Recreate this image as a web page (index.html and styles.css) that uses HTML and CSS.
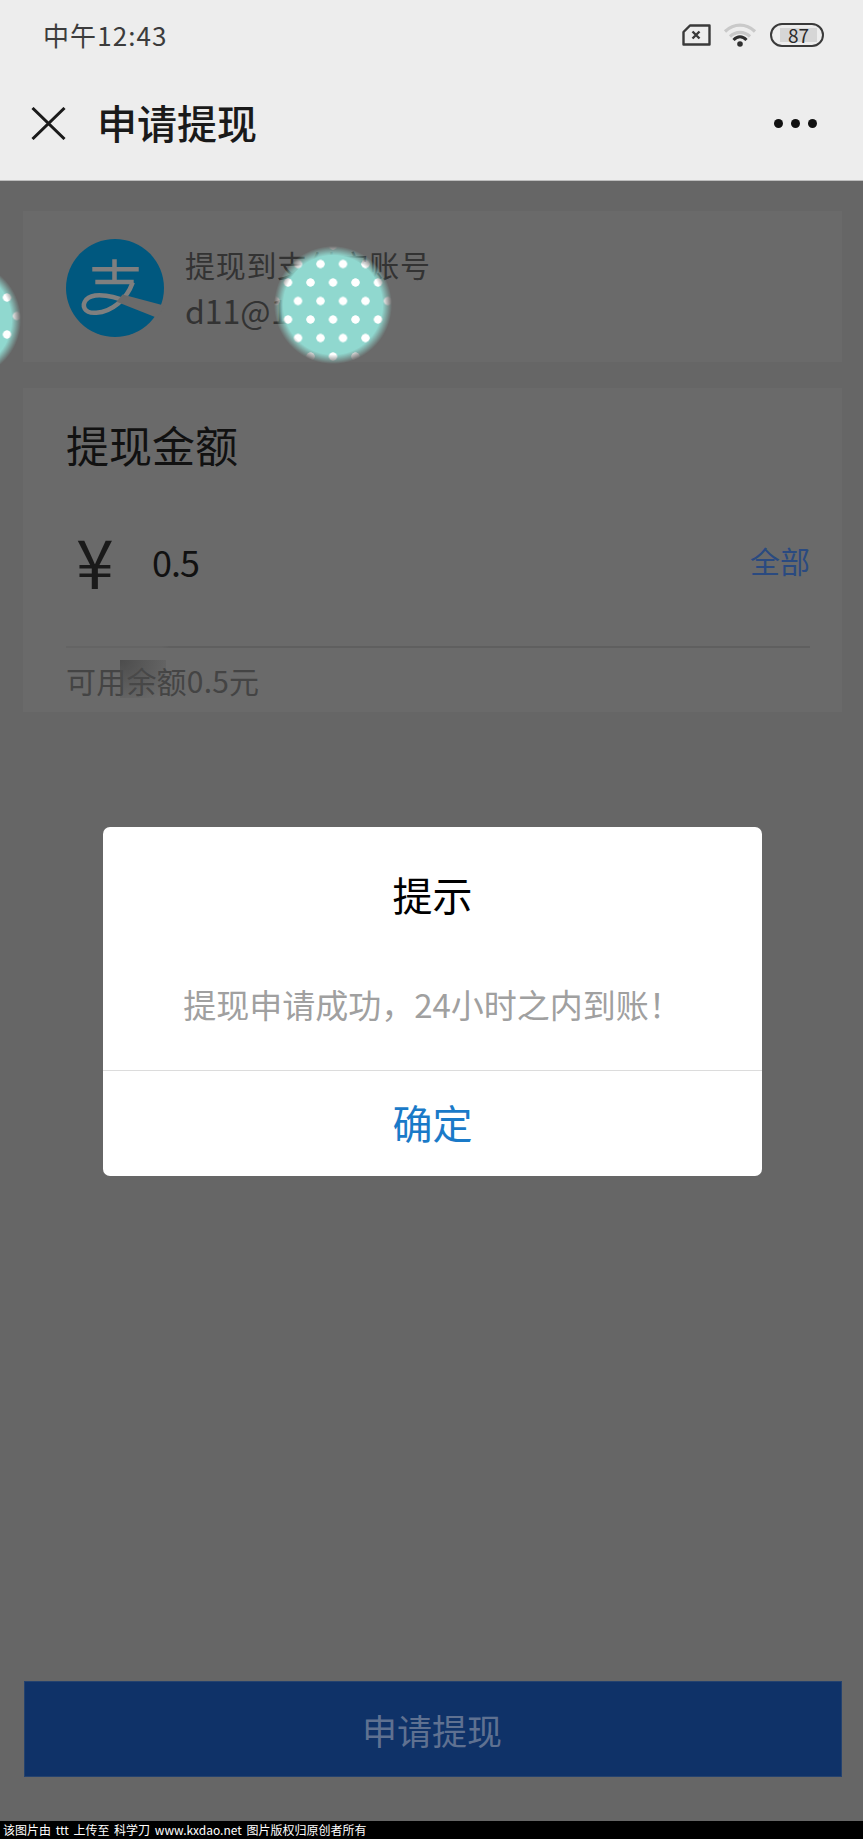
FILE: index.html
```html
<!DOCTYPE html>
<html lang="zh-CN">
<head>
    <meta charset="UTF-8">
    <meta name="viewport" content="width=device-width, initial-scale=1.0">
    <title>申请提现</title>
    <link rel="stylesheet" href="styles.css">
</head>
<body>
    <div class="page">
        <header class="top">
            <div class="status">
                <span class="time">中午12:43</span>
                <div class="status-icons">
                    <svg class="sim" viewBox="0 0 29 22">
                        <path d="M8 1.5H27.5V20.5H1.5V8Z" fill="none" stroke="#3a3a3a" stroke-width="2.4" stroke-linejoin="round"/>
                        <path d="M10.5 7.5L17.5 14.5M17.5 7.5L10.5 14.5" stroke="#3a3a3a" stroke-width="2.4"/>
                    </svg>
                    <svg class="wifi" viewBox="0 0 34 24">
                        <path d="M2 8.5C11 0 23 0 32 8.5" fill="none" stroke="#c9c9c9" stroke-width="3.2"/>
                        <path d="M7 13.5C13 8 21 8 27 13.5" fill="none" stroke="#c9c9c9" stroke-width="3.2"/>
                        <path d="M10.5 17C14.5 12.8 19.5 12.8 23.5 17" fill="none" stroke="#2f2f2f" stroke-width="3"/>
                        <circle cx="17" cy="21" r="2.8" fill="#2f2f2f"/>
                    </svg>
                    <div class="battery"><span class="battery-fill">87</span></div>
                </div>
            </div>
            <nav class="nav">
                <svg class="close" viewBox="0 0 35 33">
                    <path d="M1.5 1L33.5 32M33.5 1L1.5 32" stroke="#1a1a1a" stroke-width="3"/>
                </svg>
                <h1 class="nav-title">申请提现</h1>
                <div class="more"><i></i><i></i><i></i></div>
            </nav>
        </header>

        <main class="main">
            <section class="card account">
                <svg class="alipay" viewBox="0 0 97 97">
                    <circle cx="48.5" cy="48.5" r="48.5" fill="#00587f"/>
                    <path d="M26 30H72M48 20V42M29 42.5H67" fill="none" stroke="#7f7f7f" stroke-width="4.5"/>
                    <path d="M66 43C60 60 45 72 30 73C18 74 15 66 20 60C28 52 48 56 70 66" fill="none" stroke="#7f7f7f" stroke-width="4.5"/>
                    <path d="M56 55L98 66L90 78L50 62Z" fill="#6a6a6a"/>
                </svg>
                <div class="account-text">
                    <p class="account-label">提现到支付宝账号</p>
                    <p class="account-name">d11@1</p>
                </div>
            </section>

            <section class="card amount">
                <h2 class="amount-title">提现金额</h2>
                <div class="amount-row">
                    <span class="yen">¥</span>
                    <span class="value">0.5</span>
                    <a class="all">全部</a>
                </div>
                <p class="balance">可用余额0.5元</p>
                <div class="smudge"></div>
            </section>

            <button class="submit">申请提现</button>
        </main>

        <footer class="credit">该图片由 ttt 上传至 科学刀 www.kxdao.net 图片版权归原创者所有</footer>

        <div class="dialog">
            <h3 class="dialog-title">提示</h3>
            <p class="dialog-text">提现申请成功，24小时之内到账！</p>
            <a class="dialog-ok">确定</a>
        </div>

        <div class="sticker sticker-main"></div>
        <div class="sticker sticker-left"></div>
    </div>
</body>
</html>
```

FILE: styles.css
```css
* {
    box-sizing: border-box;
}
body {
    margin: 0;
    font-family: "Noto Sans CJK SC", "Noto Sans", sans-serif;
}
p, h1, h2, h3 {
    margin: 0;
    font-weight: 400;
}
.page {
    position: relative;
    width: 863px;
    height: 1839px;
    display: flex;
    flex-direction: column;
    overflow: hidden;
    background: #666;
}

/* top bars */
.top {
    height: 181px;
    background: #ededed;
    border-bottom: 1px solid #bdbdbd;
}
.status {
    height: 70px;
    padding: 0 39px 0 43px;
    display: flex;
    align-items: center;
    justify-content: space-between;
}
.time {
    margin-top: -2px;
    font-size: 26px;
    letter-spacing: 1.1px;
    color: #3c3c3c;
}
.status-icons {
    display: flex;
    align-items: center;
}
.sim {
    width: 29px;
    height: 22px;
}
.wifi {
    width: 34px;
    height: 24px;
    margin-left: 12px;
}
.battery {
    width: 54px;
    height: 24px;
    margin-left: 13px;
    padding: 3px 5px 3px 8px;
    border: 2px solid #3a3a3a;
    border-radius: 12px;
}
.battery-fill {
    display: block;
    height: 14px;
    line-height: 14px;
    text-align: center;
    font-size: 19px;
    color: #2a2a2a;
    background: #d6d6d6;
}
.nav {
    height: 110px;
    padding: 0 46px 0 31px;
    display: flex;
    align-items: center;
}
.close {
    width: 35px;
    height: 33px;
    margin-top: -4px;
}
.nav-title {
    margin-top: -6px;
    margin-left: 31px;
    font-size: 40px;
    font-weight: 500;
    color: #1a1a1a;
}
.more {
    margin-top: -4px;
    margin-left: auto;
    display: flex;
    gap: 8px;
}
.more i {
    width: 9px;
    height: 9px;
    border-radius: 50%;
    background: #111;
}

/* dimmed page content */
.main {
    flex: 1;
    padding: 30px 21px 0 23px;
    display: flex;
    flex-direction: column;
}
.card {
    background: #6a6a6a;
}
.account {
    height: 151px;
    padding-left: 43px;
    display: flex;
    align-items: center;
}
.alipay {
    width: 98px;
    height: 98px;
    margin-top: 3px;
    flex: none;
}
.account-text {
    margin-left: 21px;
    color: #333;
}
.account-label {
    font-size: 30px;
    letter-spacing: 0.7px;
    line-height: 46px;
}
.account-name {
    font-size: 32px;
    line-height: 46px;
}
.amount {
    position: relative;
    height: 324px;
    margin-top: 26px;
    padding: 26px 32px 0 43px;
}
.amount-title {
    font-size: 43px;
    line-height: 60px;
    color: #111;
}
.amount-row {
    height: 147px;
    margin-top: 27px;
    padding-bottom: 28px;
    display: flex;
    align-items: center;
    border-bottom: 2px solid #5f5f5f;
    border-image: linear-gradient(90deg, #646464 0, #646464 13%, #5f5f5f 14%) 1;
}
.yen {
    width: 86px;
    padding-left: 10px;
    font-size: 68px;
    color: #1a1a1a;
}
.value {
    margin-top: 2px;
    font-size: 36px;
    letter-spacing: -1px;
    color: #111;
}
.all {
    margin-left: auto;
    font-size: 30px;
    color: #2a4a80;
}
.balance {
    margin-top: 11px;
    font-size: 30px;
    line-height: 42px;
    letter-spacing: 0.2px;
    color: #444;
}
.smudge {
    position: absolute;
    left: 97px;
    top: 272px;
    width: 46px;
    height: 38px;
    background: radial-gradient(ellipse at top left, #4c4c4c, rgba(102, 102, 102, 0) 90%);
}
.submit {
    height: 96px;
    margin-top: auto;
    margin-bottom: 44px;
    margin-left: 1px;
    border: 1px solid #24426f;
    padding: 0 2px 0 0;
    font: inherit;
    font-size: 35px;
    color: #5f7191;
    background: #0f3268;
}
.credit {
    height: 18px;
    padding-left: 3px;
    font-size: 12px;
    line-height: 18px;
    word-spacing: 2px;
    white-space: nowrap;
    color: #fff;
    background: #000;
}

/* alert box */
.dialog {
    position: absolute;
    left: 103px;
    top: 827px;
    width: 659px;
    height: 349px;
    display: flex;
    flex-direction: column;
    text-align: center;
    background: #fff;
    border-radius: 7px;
}
.dialog-title {
    margin-top: 39px;
    font-size: 40px;
    line-height: 56px;
    color: #000;
}
.dialog-text {
    margin-top: 59px;
    font-size: 33px;
    line-height: 46px;
    color: #a0a0a0;
}
.dialog-ok {
    margin-top: 43px;
    padding-top: 20px;
    border-top: 1px solid #dcdcdc;
    font-size: 40px;
    line-height: 62px;
    color: #1a7ac8;
}

/* polka dot stickers, feathered at the rim */
.sticker {
    position: absolute;
    width: 118px;
    height: 118px;
    background-color: #90d8cf;
    background-image:
        radial-gradient(circle 4.5px at center, #fff 85%, rgba(255, 255, 255, 0) 100%),
        radial-gradient(circle 4.5px at center, #fff 85%, rgba(255, 255, 255, 0) 100%);
    background-size: 22.5px 37px;
    background-position: 12.75px -0.5px, 2.75px 18px;
    -webkit-mask-image: radial-gradient(circle closest-side, #000 84%, transparent 100%);
    mask-image: radial-gradient(circle closest-side, #000 84%, transparent 100%);
}
.sticker-main {
    left: 274px;
    top: 246px;
}
.sticker-left {
    left: -97px;
    top: 261px;
}
```
